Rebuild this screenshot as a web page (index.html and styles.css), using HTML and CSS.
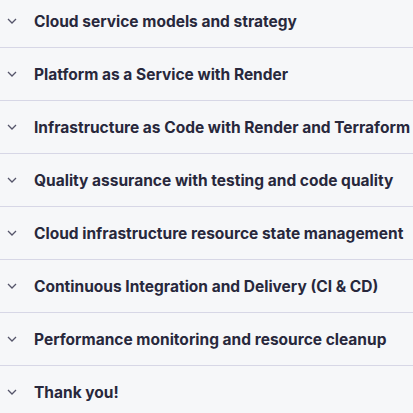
FILE: index.html
```html
<!DOCTYPE html>
<html>
<head>
<meta charset="utf-8">
<link rel="stylesheet" href="styles.css">
</head>
<body>
<div class="list">
  <div class="row"><svg class="chev" viewBox="0 0 10 6"><path d="M1 1l4 4 4-4"/></svg><span>Cloud service models and strategy</span></div>
  <div class="row"><svg class="chev" viewBox="0 0 10 6"><path d="M1 1l4 4 4-4"/></svg><span>Platform as a Service with Render</span></div>
  <div class="row"><svg class="chev" viewBox="0 0 10 6"><path d="M1 1l4 4 4-4"/></svg><span>Infrastructure as Code with Render and Terraform</span></div>
  <div class="row"><svg class="chev" viewBox="0 0 10 6"><path d="M1 1l4 4 4-4"/></svg><span>Quality assurance with testing and code quality</span></div>
  <div class="row"><svg class="chev" viewBox="0 0 10 6"><path d="M1 1l4 4 4-4"/></svg><span>Cloud infrastructure resource state management</span></div>
  <div class="row"><svg class="chev" viewBox="0 0 10 6"><path d="M1 1l4 4 4-4"/></svg><span>Continuous Integration and Delivery (CI &amp; CD)</span></div>
  <div class="row"><svg class="chev" viewBox="0 0 10 6"><path d="M1 1l4 4 4-4"/></svg><span>Performance monitoring and resource cleanup</span></div>
  <div class="row"><svg class="chev" viewBox="0 0 10 6"><path d="M1 1l4 4 4-4"/></svg><span>Thank you!</span></div>
</div>
</body>
</html>
```
FILE: styles.css
```css
html, body {
  margin: 0;
  padding: 0;
  background: #f6f7f9;
  overflow: hidden;
}
.list {
  margin-top: -5px;
  font-family: Inter, "Noto Sans", sans-serif;
}
.row {
  height: 52px;
  border-bottom: 1px solid #d7d7e6;
  display: flex;
  align-items: center;
  white-space: nowrap;
  font-size: 15.5px;
  font-weight: 700;
  color: #28283c;
}
.chev {
  flex-shrink: 0;
  width: 10px;
  height: 6px;
  margin-left: 7px;
  margin-right: 17px;
  fill: none;
  stroke: #55556a;
  stroke-width: 1.3;
}
```
